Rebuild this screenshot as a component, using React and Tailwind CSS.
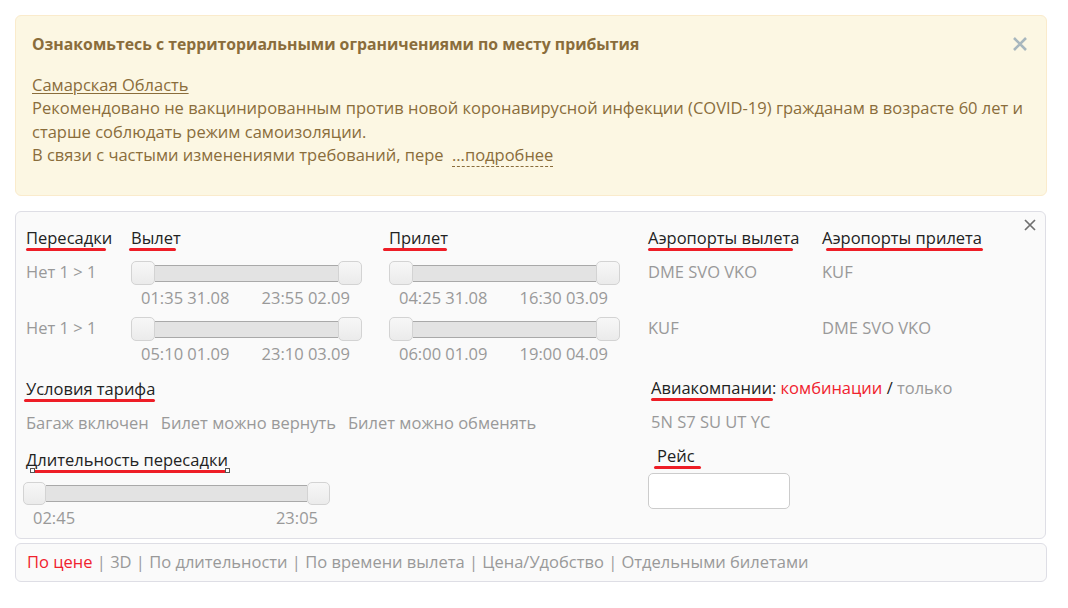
import React from "react";

function Mark({ children, bar }) {
    return (
        <span className="relative inline-block text-[#222] leading-[22px]">
            {children}
            <span className={`absolute -bottom-[2px] h-[3px] rounded-full bg-[#ee1d26] ${bar}`} />
        </span>
    );
}

function Slider({ width, knob = "w-[24px] h-[24px]", from, to }) {
    return (
        <div className={width}>
            <div className="flex items-center">
                <div className={`${knob} shrink-0 rounded-[5px] border border-[#d3d3d3] bg-gradient-to-b from-[#f7f7f7] to-[#ebebeb]`} />
                <div className="h-[17px] flex-1 border-y border-[#a9a9a9] bg-[#e3e3e3]" />
                <div className={`${knob} shrink-0 rounded-[5px] border border-[#d3d3d3] bg-gradient-to-b from-[#f7f7f7] to-[#ebebeb]`} />
            </div>
            <div className="mt-[2px] flex justify-between pl-[10px] pr-[12px] leading-[22px] text-[#999]">
                <span>{from}</span>
                <span>{to}</span>
            </div>
        </div>
    );
}

export default function App() {
    const rows = [
        { dep: ["01:35 31.08", "23:55 02.09"], arr: ["04:25 31.08", "16:30 03.09"], from: "DME SVO VKO", to: "KUF" },
        { dep: ["05:10 01.09", "23:10 03.09"], arr: ["06:00 01.09", "19:00 04.09"], from: "KUF", to: "DME SVO VKO" },
    ];

    return (
        <div className="min-h-screen bg-white pl-[15px] pt-[15px] text-[16.5px]" style={{ fontFamily: "'Open Sans', 'Liberation Sans', sans-serif" }}>
            <div className="w-[1032px]">
                {/* Alert */}
                <div className="relative rounded-[6px] border border-[#faebcc] bg-[#fcf7e3] pl-[16px] pr-[16px] pt-[17px] pb-[29px] text-[#8a6d3b]">
                    <div className="text-[15.8px] font-bold leading-[22px]">
                        Ознакомьтесь с территориальными ограничениями по месту прибытия
                    </div>
                    <button className="absolute right-[18px] top-[20px] text-[#a8b7be]">
                        <svg width="16" height="16" viewBox="0 0 16 16" fill="none" stroke="currentColor" strokeWidth="2.6">
                            <path d="M2 2 L14 14 M14 2 L2 14" />
                        </svg>
                    </button>
                    <div className="mt-[18px] leading-[23.3px]">
                        <div><a className="underline underline-offset-2">Самарская Область</a></div>
                        <div>
                            Рекомендовано не вакцинированным против новой коронавирусной инфекции (COVID-19) гражданам в возрасте 60 лет и старше соблюдать режим самоизоляции.
                        </div>
                        <div>
                            В связи с частыми изменениями требований, пере{" "}
                            <span className="ml-[4px] border-b border-dashed border-[#8a6d3b]">...подробнее</span>
                        </div>
                    </div>
                </div>

                {/* Filters */}
                <div className="relative mt-[15px] w-[1031px] rounded-[6px] border border-[#dedee5] bg-[#fafafa] pl-[10px] pt-[15px] pb-[9px]">
                    <button className="absolute right-[8px] top-[6px] text-[#6f6f6f]">
                        <svg width="14" height="14" viewBox="0 0 14 14" fill="none" stroke="currentColor" strokeWidth="1.7">
                            <path d="M2 2 L12 12 M12 2 L2 12" />
                        </svg>
                    </button>

                    <div className="flex leading-[22px]">
                        <div className="w-[105px]"><Mark bar="left-0 w-[80px]">Пересадки</Mark></div>
                        <div className="w-[258px]"><Mark bar="-left-[2px] w-[47px]">Вылет</Mark></div>
                        <div className="w-[259px]"><Mark bar="-left-[6px] w-[64px]">Прилет</Mark></div>
                        <div className="w-[174px]"><Mark bar="left-0 w-[145px]">Аэропорты вылета</Mark></div>
                        <div><Mark bar="left-[4px] w-[157px]">Аэропорты прилета</Mark></div>
                    </div>

                    <div className="mt-[12px]">
                        {rows.map((r, i) => (
                            <div key={i} className="flex pb-[8px]">
                                <div className="w-[105px] leading-[22px] text-[#999]">Нет 1 &gt; 1</div>
                                <div className="w-[258px]"><Slider width="w-[231px]" from={r.dep[0]} to={r.dep[1]} /></div>
                                <div className="w-[259px]"><Slider width="w-[231px]" from={r.arr[0]} to={r.arr[1]} /></div>
                                <div className="w-[174px] leading-[22px] text-[#999]">{r.from}</div>
                                <div className="leading-[22px] text-[#999]">{r.to}</div>
                            </div>
                        ))}
                    </div>

                    <div className="mt-[4px] flex">
                        <div className="w-[622px]">
                            <Mark bar="-left-[2px] w-[131px]">Условия тарифа</Mark>
                            <div className="mt-[10px] flex gap-[12px] leading-[22px] text-[#999]">
                                <span>Багаж включен</span>
                                <span>Билет можно вернуть</span>
                                <span>Билет можно обменять</span>
                            </div>
                            <div className="mt-[14px]">
                                <span className="relative inline-block text-[#222] leading-[22px]">
                                    Длительность пересадки
                                    <span className="absolute -bottom-[2px] left-[6px] h-[3px] w-[194px] rounded-full bg-[#ee1d26]" />
                                    <span className="absolute -bottom-[2px] left-[4px] h-[5px] w-[5px] border border-[#555] bg-white" />
                                    <span className="absolute -bottom-[2px] left-[199px] h-[5px] w-[5px] border border-[#555] bg-white" />
                                </span>
                            </div>
                            <div className="mt-[9px] -ml-[3px]">
                                <Slider width="w-[307px]" knob="w-[23px] h-[23px]" from="02:45" to="23:05" />
                            </div>
                        </div>
                        <div>
                            <div className="ml-[3px] leading-[22px]">
                                <Mark bar="left-0 w-[122px]">Авиакомпании</Mark>
                                <span className="text-[#222]">: </span>
                                <span className="text-[#f0222e]">комбинации</span>
                                <span className="text-[#222]"> / </span>
                                <span className="text-[#999]">только</span>
                            </div>
                            <div className="ml-[3px] mt-[12px] leading-[22px] text-[#999]">5N S7 SU UT YC</div>
                            <div className="ml-[9px] mt-[11px]"><Mark bar="-left-[3px] w-[47px]">Рейс</Mark></div>
                            <input className="mt-[4px] block h-[36px] w-[142px] rounded-[5px] border border-[#cccccc] bg-white outline-none" />
                        </div>
                    </div>
                </div>

                {/* Sort */}
                <div className="mt-[4px] flex h-[39px] items-center rounded-[6px] border border-[#dedee5] bg-[#fafafa] pl-[11px] text-[#999]">
                    <span className="text-[#f0222e]">По цене</span>
                    <span>&nbsp;|&nbsp;3D&nbsp;|&nbsp;По длительности&nbsp;|&nbsp;По времени вылета&nbsp;|&nbsp;Цена/Удобство&nbsp;|&nbsp;Отдельными билетами</span>
                </div>
            </div>
        </div>
    );
}
